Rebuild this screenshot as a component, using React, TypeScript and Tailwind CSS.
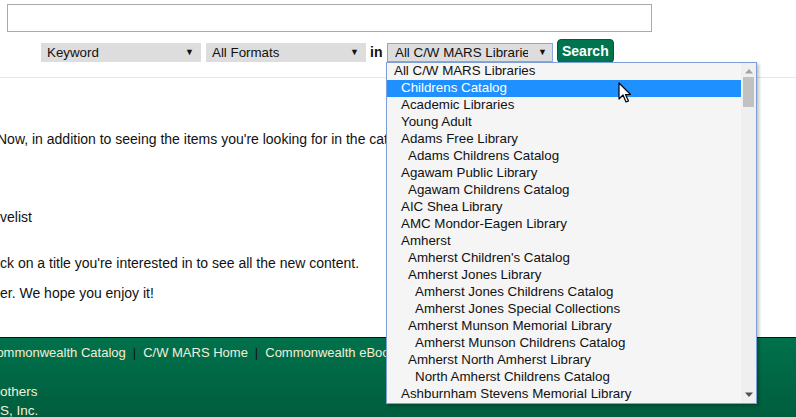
import React from "react";

type Item = { label: string; level: number; active?: boolean };

const items: Item[] = [
  { label: "All C/W MARS Libraries", level: 0 },
  { label: "Childrens Catalog", level: 1, active: true },
  { label: "Academic Libraries", level: 1 },
  { label: "Young Adult", level: 1 },
  { label: "Adams Free Library", level: 1 },
  { label: "Adams Childrens Catalog", level: 2 },
  { label: "Agawam Public Library", level: 1 },
  { label: "Agawam Childrens Catalog", level: 2 },
  { label: "AIC Shea Library", level: 1 },
  { label: "AMC Mondor-Eagen Library", level: 1 },
  { label: "Amherst", level: 1 },
  { label: "Amherst Children's Catalog", level: 2 },
  { label: "Amherst Jones Library", level: 2 },
  { label: "Amherst Jones Childrens Catalog", level: 3 },
  { label: "Amherst Jones Special Collections", level: 3 },
  { label: "Amherst Munson Memorial Library", level: 2 },
  { label: "Amherst Munson Childrens Catalog", level: 3 },
  { label: "Amherst North Amherst Library", level: 2 },
  { label: "North Amherst Childrens Catalog", level: 3 },
  { label: "Ashburnham Stevens Memorial Library", level: 1 },
];

const pad = ["pl-[7px]", "pl-[14px]", "pl-[21px]", "pl-[28px]"];

function Select({ label, w }: { label: string; w: string }) {
  return (
    <div
      className={`${w} h-[19px] flex items-center justify-between bg-[#dddddd] text-[13.33px] text-[#111] border border-[#dddddd] pl-[5px] pr-[6px] overflow-hidden whitespace-nowrap`}
    >
      <span>{label}</span>
      <span className="text-[9px] leading-none">▼</span>
    </div>
  );
}

export default function App() {
  return (
    <div
      className="relative w-[796px] h-[417px] overflow-hidden bg-white text-[#111]"
      style={{ fontFamily: '"Liberation Sans", Arial, sans-serif' }}
    >
      <div className="flex flex-col">
        <div className="pt-[4px] pl-[7px]">
          <div className="w-[645px] h-[28px] border border-[#aaaaaa] bg-white" />
        </div>
        <div className="flex items-start mt-[7px] pl-[41px] h-[24px]">
          <div className="mt-[4px]">
            <Select label="Keyword" w="w-[160px]" />
          </div>
          <div className="mt-[4px] ml-[5px]">
            <Select label="All Formats" w="w-[160px]" />
          </div>
          <span className="mt-[4px] ml-[4px] w-[17px] text-[14px] font-bold leading-[18px]">in</span>
          <div className="mt-[4px]">
            <div className="w-[166px] h-[19px] flex items-center justify-between bg-[#dddddd] text-[13.33px] text-[#111] border border-[#86a7e0] pl-[7px] pr-[5px] overflow-hidden whitespace-nowrap">
              <span className="overflow-hidden w-[133px]">All C/W MARS Libraries</span>
              <span className="text-[9px] leading-none">▼</span>
            </div>
          </div>
          <button className="ml-[4px] h-[24px] px-[4px] rounded-[4px] bg-[#00744f] border border-[#005a3c] text-white font-bold text-[14px] leading-none">
            Search
          </button>
        </div>
        <div className="mt-[14px] border-t border-[#e6e6e6]" />
        <div className="text-[14px] leading-[17px] text-[#111]">
          <p className="mt-[53px] ml-[-3px] whitespace-nowrap">
            Now, in addition to seeing the items you're looking for in the catalog
          </p>
          <p className="mt-[61px] whitespace-nowrap">velist</p>
          <p className="mt-[29px] whitespace-nowrap">ck on a title you're interested in to see all the new content.</p>
          <p className="mt-[13px] whitespace-nowrap">er. We hope you enjoy it!</p>
        </div>
        <div className="mt-[35px] h-[90px] border-t border-[#111] bg-gradient-to-b from-[#00714b] to-[#005b3c] text-[13px] text-[#f3efd9] leading-[19px]">
          <div className="mt-[5px] flex whitespace-nowrap">
            <span className="ml-[-13px]">Commonwealth Catalog</span>
            <span className="mx-[7px] text-[#111]">|</span>
            <span>C/W MARS Home</span>
            <span className="mx-[7px] text-[#111]">|</span>
            <span>Commonwealth eBooks</span>
          </div>
          <div className="mt-[20px] text-[13.5px]">others</div>
          <div className="text-[13.5px]">S, Inc.</div>
        </div>
      </div>

      {/* Dropdown list overlay */}
      <div className="absolute left-[386px] top-[62px] w-[371px] h-[342px] border border-[#7d9fd6] bg-[#f5f5f5] shadow-[2px_2px_3px_rgba(0,0,0,0.25)] flex">
        <div className="flex-1 flex flex-col text-[13.33px]">
          {items.map((it) => (
            <div
              key={it.label}
              className={`h-[17px] leading-[16px] whitespace-nowrap ${pad[it.level]} ${
                it.active ? "bg-[#1e90ff] text-white" : "text-[#111]"
              }`}
            >
              {it.label}
            </div>
          ))}
        </div>
        <div className="w-[15px] bg-[#efefef] flex flex-col items-center">
          <svg width="10" height="6" viewBox="0 0 10 6" className="mt-[5px]">
            <path d="M1 5.5 L5 1 L9 5.5 Z" fill="#a3a3a3" />
          </svg>
          <div className="mt-[3px] w-[11px] h-[30px] bg-[#c1c1c1]" />
          <div className="flex-1" />
          <svg width="10" height="6" viewBox="0 0 10 6" className="mb-[5px]">
            <path d="M1 0.5 L9 0.5 L5 5 Z" fill="#505050" />
          </svg>
        </div>
      </div>

      {/* mouse cursor */}
      <svg className="absolute left-[618px] top-[82px]" width="14" height="22" viewBox="0 0 14 22">
        <path
          d="M1 1 L1 17 L5 13 L8 20 L10.5 19 L7.5 12.5 L12.5 12.5 Z"
          fill="#fff"
          stroke="#000"
          strokeWidth="1.2"
          strokeLinejoin="round"
        />
      </svg>
    </div>
  );
}
